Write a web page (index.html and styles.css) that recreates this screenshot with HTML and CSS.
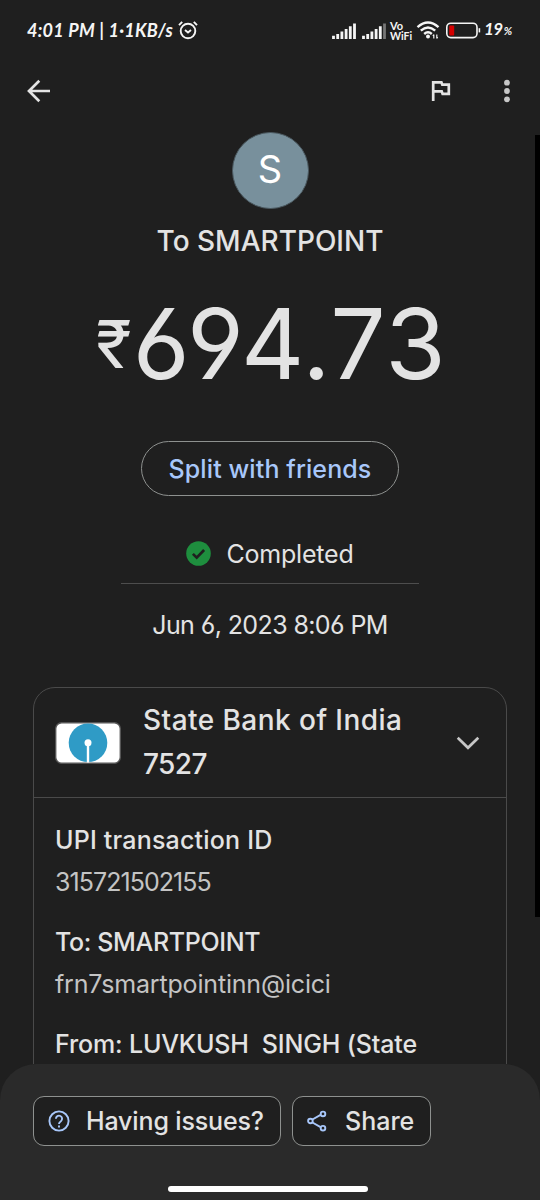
FILE: index.html
```html
<!DOCTYPE html>
<html lang="en">
<head>
	<meta charset="utf-8">
	<title>Transaction details</title>
	<link rel="stylesheet" href="styles.css">
</head>
<body>
	<div class="screen">
		<div class="statusBar">
			<span class="clock">4:01 PM | 1·1KB/s</span>
			<svg class="alarm" width="20" height="20" viewBox="0 0 20 20">
				<circle cx="10" cy="11" r="7.3"/>
				<path d="M1 5.2 4.2 1.8M19 5.2 15.8 1.8M7 10l3 2.5 3-2.5"/>
			</svg>
			<div class="statusIcons">
				<svg class="signal" width="24" height="16" viewBox="0 0 24 16">
					<path d="M1.5 12.8V16M5.7 11V16M9.9 8.6V16M14.1 6V16M18.3 3.2V16M22.5 .5V16"/>
				</svg>
				<svg class="signal second" width="24" height="16" viewBox="0 0 24 16">
					<path d="M1.5 12.8V16M5.7 11V16M9.9 8.6V16M14.1 6V16M18.3 3.2V16"/>
					<path class="off" d="M22.5 .5V16"/>
				</svg>
				<div class="vowifi"><span class="vo">Vo</span><span>WiFi</span></div>
				<svg class="wifi" width="24" height="18" viewBox="0 0 24 18">
					<path d="M1.5 6.2Q12-3 22.5 6.2M4.8 9.7Q12 3.2 19.2 9.7M8.2 13Q12 9.6 15.8 13"/>
					<circle cx="12" cy="15.5" r="2"/>
					<path class="arrows" d="M17.8 13.5v4M20.8 13.5v4M17 15l.8-1.5M21.6 16l-.8 1.5"/>
				</svg>
				<svg class="battery" width="36" height="17" viewBox="0 0 36 17">
					<rect class="shell" x=".8" y="1.2" width="30.2" height="14.4" rx="4"/>
					<rect class="level" x="3.2" y="3.6" width="5" height="9.8" rx="1"/>
					<path d="M33.4 6.2v4.2"/>
				</svg>
				<span class="percent">19<small>%</small></span>
			</div>
		</div>

		<div class="toolbar">
			<svg width="24" height="24" viewBox="0 0 24 24">
				<path d="M23 12H2.5M12.3 1.8 2 12l10.3 10.2"/>
			</svg>
			<svg class="flag" width="20" height="22" viewBox="0 0 20 22">
				<path d="M2.2 21V2.3h8.2l.9 2.4h6.5v9.2h-6.2l-.9-2.5H2.2"/>
			</svg>
			<svg class="more" width="8" height="24" viewBox="0 0 8 24">
				<circle cx="4" cy="3.7" r="2.9"/>
				<circle cx="4" cy="12" r="2.9"/>
				<circle cx="4" cy="20.3" r="2.9"/>
			</svg>
		</div>

		<div class="content">
			<div class="avatar">S</div>
			<div class="payee">To SMARTPOINT</div>
			<div class="amount"><span class="rupee">₹</span><span class="number">694.73</span></div>
			<div class="splitBtn"><span>Split with friends</span></div>
			<div class="status">
				<svg width="25" height="25" viewBox="0 0 25 25">
					<circle cx="12.5" cy="12.5" r="12.3"/>
					<path d="M6.9 12.9l3.8 3.7 7.4-7.6"/>
				</svg>
				<span>Completed</span>
			</div>
			<div class="date">Jun 6, 2023 8:06 PM</div>

			<div class="card">
				<div class="cardHead">
					<svg class="bankLogo" width="66" height="42" viewBox="0 0 66 42">
						<rect x=".7" y=".7" width="64.6" height="40.6" rx="6"/>
						<circle class="disc" cx="33" cy="20.8" r="19.3"/>
						<circle class="hole" cx="33" cy="20.8" r="3.5"/>
						<path d="M33 21v19.5"/>
					</svg>
					<div class="bankName"><span class="name">State Bank of India</span><br><span class="last4">7527</span></div>
					<svg class="chevron" width="24" height="14" viewBox="0 0 24 14">
						<path d="M1.7 1.7 12 11.8 22.3 1.7"/>
					</svg>
				</div>
				<div class="cardBody">
					<div class="label upi">UPI transaction ID</div>
					<div class="value txn">315721502155</div>
					<div class="label to">To: SMARTPOINT</div>
					<div class="value vpa">frn7smartpointinn@icici</div>
					<div class="label from">From: LUVKUSH&nbsp; SINGH (State</div>
				</div>
			</div>
		</div>

		<div class="sheet">
			<div class="actions">
				<div class="actionBtn help">
					<svg width="22" height="22" viewBox="0 0 22 22">
						<circle cx="11" cy="11" r="9.6"/>
						<path d="M7.9 8.7a3.1 3.1 0 1 1 5 2.5Q11 12.5 11 14"/>
						<path d="M11 15.4v2"/>
					</svg>
					<span>Having issues?</span>
				</div>
				<div class="actionBtn share">
					<svg width="20" height="22" viewBox="0 0 20 22">
						<path d="M5 9.8 14 4.6M5 12.2l9 5.2"/>
						<circle cx="3.4" cy="11" r="2.3"/>
						<circle cx="16" cy="3.9" r="2.3"/>
						<circle cx="16" cy="18.2" r="2.3"/>
					</svg>
					<span>Share</span>
				</div>
			</div>
			<div class="homeBar"></div>
		</div>

		<div class="scrollbar"></div>
	</div>
</body>
</html>
```
FILE: styles.css
```css
*{
	box-sizing: border-box;
	padding:0;
	margin:0;
}
body{
	background-color: #1f1f1f;
	color:#e3e3e3;
	font-family: Inter, "Noto Sans", sans-serif;
	/* open six and nine */
	font-feature-settings: "cv03", "cv04";
}
svg{
	flex:none;
	fill:none;
	stroke:#e3e3e3;
	stroke-width:2.7;
}
.screen{
	position: relative;
	display: flex;
	flex-direction: column;
	width:540px;
	height:1200px;
	overflow: hidden;
	white-space: nowrap;
}

/* status bar */
.statusBar{
	display: flex;
	align-items: center;
	flex:none;
	height:60px;
	padding:0 28px 0 27px;
	color:#f5f5f5;
}
.statusBar svg{
	stroke:#f5f5f5;
}
.clock{
	width:147px;
	font:italic 700 18px/24px Lato, sans-serif;
	letter-spacing: 0.25px;
}
.statusBar .alarm{
	margin-left:4px;
	stroke-width:1.9;
}
.statusIcons{
	display: flex;
	align-items: center;
	margin-left:auto;
}
.statusBar .signal{
	margin-top:1px;
	stroke-width:2.8;
}
.statusBar .second{
	margin-left:6px;
}
.statusBar .signal .off{
	stroke:#777;
}
.vowifi{
	display: flex;
	flex-direction: column;
	width:22px;
	margin-left:4px;
	font:700 10.5px/10px Lato, sans-serif;
}
.vo{
	font-size: 11px;
	line-height: 11px;
}
.wifi{
	margin-left:4px;
}
.wifi circle{
	fill:#f5f5f5;
	stroke:none;
}
.statusBar .wifi{
	stroke-width:2.4;
}
.wifi .arrows{
	stroke-width:1.2;
}
.statusBar .battery{
	margin-left:6px;
	stroke-width:1.6;
}
.battery .level{
	fill:#d50000;
	stroke:none;
}
.percent{
	width:28px;
	margin-left:2px;
	font:italic 700 17px/20px Lato, sans-serif;
	letter-spacing: -0.5px;
}
.percent small{
	margin-left:1px;
	font-size: 11px;
}

/* toolbar */
.toolbar{
	display: flex;
	align-items: center;
	flex:none;
	height:62px;
	padding:0 29px 0 27px;
}
.toolbar .flag{
	margin-left:auto;
}
.toolbar .more{
	margin-left:52px;
	fill:#c7c7c7;
	stroke:none;
}

/* payment summary */
.content{
	display: flex;
	flex-direction: column;
	align-items: center;
	height:942px;
	padding-top:10px;
	overflow: hidden;
}
.avatar{
	flex:none;
	width:77px;
	height:77px;
	border:1px solid #4b5960;
	border-radius: 50%;
	background-color: #78909c;
	color:#fff;
	font-size: 38px;
	line-height: 73px;
	text-align: center;
}
.payee{
	margin-top:16px;
	font-size: 28px;
	font-weight: 500;
	line-height: 32px;
}
.amount{
	display: flex;
	align-items: center;
	margin-top:37px;
	line-height: 100px;
}
.rupee{
	margin-right:1px;
	font-size: 66px;
}
.number{
	margin-right:-3px;
	font-size: 98px;
	letter-spacing: 1.2px;
}
.splitBtn{
	flex:none;
	width:258px;
	height:55px;
	margin-top:47px;
	border:1px solid #8e918f;
	border-radius: 28px;
	color:#a8c7fa;
	font-size: 25px;
	font-weight: 500;
	line-height: 54px;
	letter-spacing: 0.1px;
	text-align: center;
}
.status{
	display: flex;
	justify-content: center;
	align-items: center;
	flex:none;
	width:298px;
	height:45px;
	margin-top:43px;
	padding-bottom:15px;
	border-bottom:1px solid #4d4d4d;
	font-size: 25px;
	letter-spacing: -0.2px;
}
.status svg{
	margin-right:15px;
}
.status circle{
	fill:#1e8e3e;
	stroke:none;
}
.status path{
	stroke:#1f1f1f;
}
.date{
	margin-top:26px;
	font-size: 25px;
	line-height: 30px;
	letter-spacing: -0.6px;
}

/* bank card */
.card{
	flex:none;
	width:474px;
	height:500px;
	margin-top:47px;
	border:1px solid #4a4a4a;
	border-radius: 22px;
}
.cardHead{
	display: flex;
	align-items: center;
	height:110px;
	padding:0 26px 0 21px;
	border-bottom:1px solid #4a4a4a;
}
.bankLogo rect{
	fill:#fff;
	stroke:#555;
	stroke-width:1.4;
}
.bankLogo .disc{
	fill:#2f9bc6;
	stroke:none;
}
.bankLogo .hole{
	fill:#fff;
	stroke:none;
}
.bankLogo path{
	stroke:#fff;
	stroke-width:2.4;
}
.bankName{
	margin-left:22px;
	padding-bottom:2px;
	font-size: 28px;
	font-weight: 500;
	line-height: 44px;
}
.name{
	letter-spacing: 0.45px;
}
.last4{
	letter-spacing: -0.6px;
}
.chevron{
	margin-left:auto;
	stroke:#c7c7c7;
}
.cardBody{
	padding:21px 21px 0;
	font-size: 25px;
	line-height: 42px;
}
.label{
	font-weight: 500;
}
.value{
	margin-bottom:18px;
	color:#c4c4c4;
}
.upi{
	letter-spacing: 0.2px;
}
.txn{
	letter-spacing: -0.95px;
}
.to{
	letter-spacing: -0.35px;
}
.vpa{
	letter-spacing: -0.18px;
}
.from{
	letter-spacing: -0.15px;
}

/* bottom sheet */
.sheet{
	flex:none;
	height:136px;
	padding:32px 33px 0;
	border-radius: 36px 36px 0 0;
	background-color: #2a2a2a;
}
.actions{
	display: flex;
	gap:11px;
}
.actionBtn{
	display: flex;
	align-items: center;
	height:50px;
	padding-left:14px;
	border:1px solid #8e918f;
	border-radius: 11px;
	background-color: #1f1f1f;
	font-size: 25px;
	font-weight: 500;
}
.actionBtn svg{
	stroke:#a8c7fa;
	stroke-width:1.9;
}
.help{
	width:248px;
	letter-spacing: -0.15px;
}
.help span{
	margin-left:16px;
}
.share{
	width:139px;
}
.share span{
	margin-left:18px;
}
.homeBar{
	width:200px;
	height:6px;
	margin:40px 0 0 135px;
	border-radius: 3px;
	background-color: #fff;
}
.scrollbar{
	position: absolute;
	top:135px;
	right:0;
	width:5px;
	height:782px;
	background-color: #000;
}
```
